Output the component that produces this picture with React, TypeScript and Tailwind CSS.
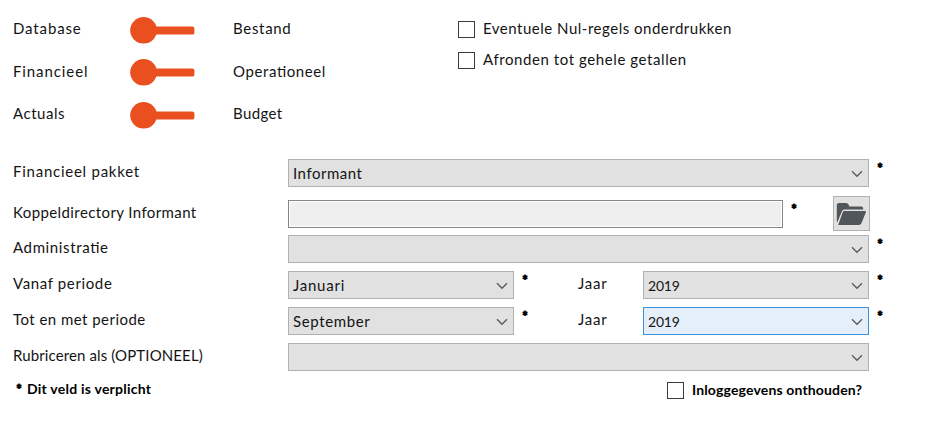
import React from "react";
import clsx from "clsx";

interface LabelProps {
  children: React.ReactNode;
  className?: string;
}

const Label: React.FC<LabelProps> = ({ children, className }) => (
  <span className={clsx("block leading-5 whitespace-nowrap", className)}>
    {children}
  </span>
);

const Required: React.FC<{ className?: string }> = ({ className }) => (
  <span
    className={clsx(
      "w-2 shrink-0 self-start text-center text-[13px] font-black leading-[18px] text-black [-webkit-text-stroke:0.8px_black]",
      className
    )}
  >
    *
  </span>
);

const Toggle: React.FC = () => (
  <svg width="65" height="27" viewBox="0 0 65 27" className="shrink-0">
    <rect x="20" y="9.4" width="44.4" height="8.2" rx="2.2" fill="#ea501f" />
    <ellipse cx="13.6" cy="13.3" rx="13.4" ry="13.2" fill="#ea501f" />
  </svg>
);

interface SelectProps {
  value?: string;
  width: string;
  focused?: boolean;
  tracking?: string;
}

const Select: React.FC<SelectProps> = ({ value, width, focused, tracking }) => (
  <button
    className={clsx(
      "flex h-7 shrink-0 items-center justify-between border pl-1 pr-[5px] text-left",
      width,
      focused ? "border-[#3c91dc] bg-[#e4eff9]" : "border-[#b1b1b1] bg-[#e1e1e1]"
    )}
  >
    <Label className={tracking}>{value}</Label>
    <svg width="12" height="8" viewBox="0 0 12 8" className="mt-0.5">
      <path
        d="M1 1.2 6 6.2 11 1.2"
        fill="none"
        stroke="#5c5c5c"
        strokeWidth="1.4"
      />
    </svg>
  </button>
);

const Checkbox: React.FC = () => (
  <span className="block size-[17px] shrink-0 border border-[#3c3c3c] bg-white" />
);

const FolderIcon: React.FC = () => (
  <svg width="31" height="24" viewBox="0 0 31 24">
    <path
      d="M.8 19V3Q.8 1 2.800 1H10Q11.800 1 12.500 2.500L13.400 4.500H25.200Q27.200 4.500 27.200 6.500V7.600H8.500Q6.600 7.600 5.800 9.400L1.300 20.500Z"
      fill="#50565a"
    />
    <path
      d="M8.500 8.900H28.800Q30.400 8.900 29.900 10.300L25.400 21.300Q24.700 22.900 23 22.900H2.200L6.700 10.300Q7.200 8.900 8.500 8.900Z"
      fill="#50565a"
    />
  </svg>
);

const toggles = [
  { left: "Database", right: "Bestand", lt: "tracking-[0.87px]", rt: "tracking-[0.69px]" },
  { left: "Financieel", right: "Operationeel", lt: "tracking-[0.9px]", rt: "tracking-[0.6px]" },
  { left: "Actuals", right: "Budget", lt: "tracking-[0.54px]", rt: "tracking-[0.4px]" },
];

export default function App() {
  return (
    <div className="h-[440px] w-[945px] overflow-hidden bg-white font-['Lato',sans-serif] text-[15px] text-[#141414] [font-feature-settings:'liga'_1]">
      {/* Switches and options */}
      <div className="flex h-[159px] pl-[13px] pt-[9px]">
        <div className="w-[445px]">
          {toggles.map((t) => (
            <div key={t.left} className="flex h-[42.6px] items-start">
              <Label className={clsx("mt-[9px] w-[117px]", t.lt)}>{t.left}</Label>
              <div className="mt-[7.500px] w-[103px]">
                <Toggle />
              </div>
              <Label className={clsx("mt-[9px]", t.rt)}>{t.right}</Label>
            </div>
          ))}
        </div>
        <div className="pt-[9px]">
          <div className="flex h-[31px] items-start gap-2">
            <div className="pt-[3px]">
              <Checkbox />
            </div>
            <Label className="tracking-[0.51px]">Eventuele Nul-regels onderdrukken</Label>
          </div>
          <div className="flex items-start gap-2">
            <div className="pt-[3px]">
              <Checkbox />
            </div>
            <Label className="tracking-[0.58px]">Afronden tot gehele getallen</Label>
          </div>
        </div>
      </div>

      {/* Form fields */}
      <div className="flex flex-col gap-2 pl-[13px]">
        <div className="flex h-7">
          <Label className="mt-[2px] w-[275px] tracking-[0.75px]">Financieel pakket</Label>
          <Select value="Informant" width="w-[581px]" tracking="tracking-[0.52px]" />
          <Required className="ml-[7px]" />
        </div>

        <div className="mt-[5px] flex h-7">
          <Label className="mt-[2px] w-[275px] tracking-[0.4px]">Koppeldirectory Informant</Label>
          <input
            readOnly
            className="h-7 w-[495px] border border-[#858585] bg-[#efefef] shadow-[inset_0_0_0_1px_white] outline-none"
          />
          <Required className="ml-[7px]" />
          <button className="-mt-1 ml-[35px] flex h-[35px] w-[37px] items-center justify-center border border-[#b1b1b1] bg-[#e1e1e1]">
            <FolderIcon />
          </button>
        </div>

        <div className="-mt-px flex h-7">
          <Label className="mt-[2px] w-[275px] tracking-[0.63px]">Administratie</Label>
          <Select width="w-[581px]" />
          <Required className="ml-[7px]" />
        </div>

        <div className="flex h-7">
          <Label className="mt-[2px] w-[275px] tracking-[0.63px]">Vanaf periode</Label>
          <Select value="Januari" width="w-[226px]" tracking="tracking-[0.75px]" />
          <Required className="ml-[7px]" />
          <Label className="ml-[49px] mt-[2px] w-[65px] tracking-[0.76px]">Jaar</Label>
          <Select value="2019" width="w-[226px]" tracking="pt-px text-[14px] tracking-[-0.2px]" />
          <Required className="ml-[7px]" />
        </div>

        <div className="flex h-7">
          <Label className="mt-[2px] w-[275px] tracking-[0.46px]">Tot en met periode</Label>
          <Select value="September" width="w-[226px]" tracking="tracking-[0.62px]" />
          <Required className="ml-[7px]" />
          <Label className="ml-[49px] mt-[2px] w-[65px] tracking-[0.76px]">Jaar</Label>
          <Select value="2019" width="w-[226px]" tracking="pt-px text-[14px] tracking-[-0.2px]" focused />
          <Required className="ml-[7px]" />
        </div>

        <div className="flex h-7">
          <Label className="mt-[2px] w-[275px] tracking-[0.12px]">Rubriceren als (OPTIONEEL)</Label>
          <Select width="w-[581px]" />
        </div>
      </div>

      {/* Footer */}
      <div className="flex pl-[15px] pt-[8px] text-[14px] font-bold text-black">
        <Required className="mt-px" />
        <Label className="ml-1 w-[640px] tracking-[0.24px]">Dit veld is verplicht</Label>
        <div className="mt-[3px]">
          <Checkbox />
        </div>
        <Label className="ml-2 mt-px tracking-[0.15px]">Inloggegevens onthouden?</Label>
      </div>
    </div>
  );
}
